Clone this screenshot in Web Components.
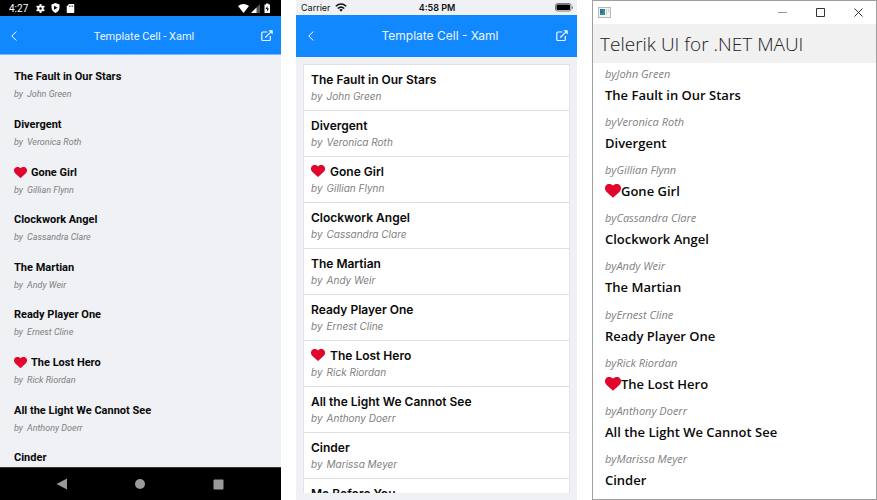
<!DOCTYPE html>
<html lang="en">
<head>
<meta charset="utf-8">
<title>Template Cell - Xaml</title>
<style>
body { margin: 0; background: #fff; }
</style>
</head>
<body>
<device-gallery>
  <android-phone></android-phone>
  <ios-phone></ios-phone>
  <desktop-window></desktop-window>
</device-gallery>
<script>
const BOOKS = [
  ["The Fault in Our Stars", "John Green"],
  ["Divergent", "Veronica Roth"],
  ["Gone Girl", "Gillian Flynn", true],
  ["Clockwork Angel", "Cassandra Clare"],
  ["The Martian", "Andy Weir"],
  ["Ready Player One", "Ernest Cline"],
  ["The Lost Hero", "Rick Riordan", true],
  ["All the Light We Cannot See", "Anthony Doerr"],
  ["Cinder", "Marissa Meyer"],
  ["Me Before You", "Jojo Moyes"]
];

function define(name, html) {
  customElements.define(name, class extends HTMLElement {
    constructor() {
      super();
      this.attachShadow({ mode: "open" }).innerHTML = html;
    }
  });
}

define("favorite-heart", `
<style>
:host { display: block; width: var(--heart, 13px); flex: none; }
svg { display: block; width: 100%; }
</style>
<svg viewBox="0 0 28 24" role="img" aria-label="Favorite"><path fill="#e2062c" d="M14 24 2.400 13.500C-.6 10.500-.8 5.500 1.600 2.600 4.500-.8 10.500-.9 14 2.800 17.500-.9 23.500-.8 26.400 2.600c2.400 2.900 2.200 7.900-.8 10.900Z"/></svg>`);

customElements.define("book-cell", class extends HTMLElement {
  constructor() {
    super();
    this.attachShadow({ mode: "open" }).innerHTML = `
<style>
:host { display: flex; flex-direction: var(--cell-direction, column); justify-content: center; gap: var(--line-gap, 0); box-sizing: border-box; white-space: nowrap; min-width: 0; }
div { display: flex; align-items: center; }
.title { gap: var(--heart-gap, 4px); color: #0a0a0a; font-size: var(--title-size); line-height: var(--title-line); font-weight: var(--title-weight, 600); }
.by { gap: var(--by-gap, 0); color: #808080; font-size: var(--by-size); line-height: var(--by-line); font-style: italic; font-weight: var(--by-weight, 400); }
</style>
<div class="title"><slot name="mark"></slot><slot></slot></div>
<div class="by"><span>by</span><slot name="author"></slot></div>`;
  }
});

customElements.define("book-list", class extends HTMLElement {
  constructor() {
    super();
    const root = this.attachShadow({ mode: "open" });
    root.innerHTML = `
<style>
:host { display: grid; grid-auto-rows: var(--row); align-content: start; overflow: hidden; box-sizing: border-box; min-height: 0; }
book-cell { padding: var(--cell-padding, 0); border-bottom: var(--cell-border, none); }
</style>`;
    this.setAttribute("role", "list");
    for (const [title, author, favorite] of BOOKS.slice(0, Number(this.getAttribute("count")))) {
      const cell = document.createElement("book-cell");
      cell.setAttribute("role", "listitem");
      cell.innerHTML = `${favorite ? '<favorite-heart slot="mark"></favorite-heart>' : ""}<span>${title}</span><span slot="author">${author}</span>`;
      root.append(cell);
    }
  }
});

define("app-bar", `
<style>
:host { display: grid; grid-template-columns: 1fr auto 1fr; align-items: center; box-sizing: border-box; background: #1288ff; color: #fff; }
button { display: block; border: 0; padding: 0; background: none; color: inherit; }
button:last-of-type { justify-self: end; }
h1 { margin: 0; padding-left: 4px; font: inherit; white-space: nowrap; opacity: .92; }
svg { display: block; fill: none; stroke: currentColor; }
</style>
<button aria-label="Back"><svg width="6" height="10" viewBox="0 0 6 10" stroke-width="1"><path d="M5.300.5.800 5l4.500 4.500"/></svg></button>
<h1><slot></slot></h1>
<button aria-label="Open source"><svg width="12" height="12" viewBox="0 0 12 12" stroke-width="1.100"><path d="M6.300 2H1.800Q.8 2 .8 3v6.500q0 1 1 1h6.500q1 0 1-1V6M4.300 7.500l5.500-5.300"/><path fill="currentColor" stroke="none" d="M7.500.3h4.200v4.200Z"/></svg></button>`);

define("android-phone", `
<style>
:host { display: grid; grid-template-rows: 16px 39px 1fr 33px; min-height: 0; min-width: 0; background: #eff1f5; font-family: Roboto, sans-serif; }
.status { display: flex; align-items: center; gap: 6px; padding: 0 9px 0 9px; background: #000; color: #fff; font-size: 10px; line-height: 16px; }
.status span { margin-right: 2px; padding-top: 1px; }
.status svg { display: block; }
.right { display: flex; align-items: center; gap: 2px; margin-left: auto; }
app-bar { padding: 2px 8px 0 11px; font-size: 11px; border-bottom: 1px solid #7cb8f8; }
book-list {
  margin-bottom: 6px; padding: 6px 14px 0;
  --row: calc(100% / 8.4); --title-size: 11px; --title-line: 16px; --title-weight: 700;
  --by-size: 9px; --by-line: 12px; --by-gap: 4px; --line-gap: 3px;
}
nav { display: flex; align-items: center; justify-content: space-between; padding: 0 57px 0 56px; background: #000; border-top: 1px solid #333; }
nav button { display: block; border: 0; padding: 0; background: none; }
nav svg { display: block; fill: #999; }
</style>
<div class="status"><span>4:27</span>
<svg width="9" height="9" viewBox="0 0 18 18"><g fill="none" stroke="#fff"><circle cx="9" cy="9" r="4.500" stroke-width="4"/><path stroke-width="4" d="M9 0v3M9 15v3M1.200 4.500l2.600 1.500M14.200 12l2.600 1.500M1.200 13.500 3.800 12M14.200 6l2.600-1.500"/></g></svg>
<svg width="9" height="10" viewBox="0 0 18 20"><path fill="#fff" d="M9 0l8 3v6c0 5-3 9-8 11-5-2-8-6-8-11V3Z"/><path d="M6 5.500v8l7-4Z"/></svg>
<svg width="9" height="9" viewBox="0 0 18 18"><path fill="#fff" d="M6 0h9q1.500 0 1.500 1.500v15Q16.500 18 15 18H3q-1.500 0-1.500-1.500V5Z"/><path stroke="#000" stroke-width="1.200" d="M7 3v3M10 3v3M13 3v3"/></svg>
<div class="right">
<svg width="11" height="9" viewBox="0 0 22 18"><path fill="#fff" d="M0 4Q11-4 22 4L11 18Z"/></svg>
<svg width="9" height="9" viewBox="0 0 18 18"><path fill="#555" d="M18 0v18H0Z"/><path fill="#fff" d="M11 7v11H0Z"/></svg>
<svg width="10" height="10" viewBox="0 0 20 20"><path fill="#fff" d="M8 1h5v2h3v17H5V3h3Z"/><path d="M11 6l-4 6h3v5l4-6h-3Z"/></svg>
</div></div>
<app-bar>Template Cell - Xaml</app-bar>
<book-list count="9"></book-list>
<nav aria-label="System">
<button aria-label="Back"><svg width="11" height="12" viewBox="0 0 11 12"><path d="M11 .5v11L.5 6Z"/></svg></button>
<button aria-label="Home"><svg width="10" height="10" viewBox="0 0 10 10"><circle cx="5" cy="5" r="5"/></svg></button>
<button aria-label="Recent apps"><svg width="11" height="11" viewBox="0 0 11 11"><rect x=".5" y=".5" width="10" height="10" rx="1"/></svg></button>
</nav>`);

define("ios-phone", `
<style>
:host { display: grid; grid-template-rows: 15px 42px 1fr; min-height: 0; min-width: 0; background: #eff1f5; font-family: Inter, sans-serif; }
.status { display: grid; grid-template-columns: 1fr auto 1fr; align-items: center; padding: 0 4px 0 5px; color: #111; font-size: 9px; line-height: 15px; }
.status div { display: flex; align-items: center; gap: 4px; }
.status b { font-weight: 600; }
.status > svg { justify-self: end; }
app-bar { padding: 0 9px 1px 12px; font-size: 12px; }
book-list {
  margin: 7px 7px 7px; background: #fff; border: 1px solid #e2e3e6; border-bottom: 0;
  --row: 46px; --title-size: 12px; --title-line: 17px; --heart: 14px; --heart-gap: 5px;
  --by-size: 10px; --by-line: 14px; --by-gap: 4px; --line-gap: 1px; --cell-padding: 0 7px 2px; --cell-border: 1px solid #dedfe1;
}
</style>
<div class="status"><div><span>Carrier</span>
<svg width="12" height="9" viewBox="0 0 24 18"><g fill="none" stroke="#111" stroke-width="3"><path d="M1.500 6.500q10.500-9 21 0M5.500 11q6.500-5.500 13 0"/></g><path fill="#111" d="M8.500 13.500q3.500-3 7 0L12 17.500Z"/></svg></div>
<b>4:58 PM</b>
<svg width="18" height="9" viewBox="0 0 18 9"><rect x=".5" y=".5" width="15.500" height="7.500" rx="2" fill="none" stroke="#777"/><rect x="1.500" y="1.500" width="13.500" height="5.500" rx="1"/><path fill="#777" d="M17 3v3q1-.5 1-1.500T17 3Z"/></svg></div>
<app-bar>Template Cell - Xaml</app-bar>
<book-list count="10"></book-list>`);

define("desktop-window", `
<style>
:host { display: grid; grid-template-rows: 23px 39px 1fr; min-height: 0; min-width: 0; box-sizing: border-box; border: 1px solid #a0a0a0; background: #fff; font-family: "Open Sans", sans-serif; }
.caption { display: flex; align-items: center; padding: 0 13px 0 5px; }
.caption svg { display: block; }
.controls { display: flex; gap: 29px; margin-left: auto; }
.controls button { display: block; border: 0; padding: 0; background: none; }
.controls svg { fill: none; stroke: #333; }
h1 { margin: 0; padding: 2px 7px 0; background: #f1f1f1; color: #222; font-size: 19px; line-height: 37px; font-weight: 300; white-space: nowrap; }
book-list {
  padding: 1px 12px 2px;
  --row: calc(100% / 9); --cell-direction: column-reverse; --title-size: 13px; --title-line: 20px;
  --by-size: 11px; --by-line: 16px; --line-gap: 3px; --heart: 16px; --heart-gap: 0; --cell-padding: 0 0 5px;
}
</style>
<div class="caption">
<svg width="13" height="11" viewBox="0 0 13 11"><rect x=".5" y=".5" width="12" height="10" fill="#f4f4f4" stroke="#b5b9bd"/><rect x="2" y="2" width="5" height="6" fill="#3a8f87"/><path fill="#2d6eb0" d="M2 2h3v4H2Z"/><path fill="#cfd4d8" d="M8 2h1v6H8zM10 2h1v3h-1z"/></svg>
<div class="controls">
<button aria-label="Minimize"><svg width="9" height="9" viewBox="0 0 9 9"><path stroke="#999" d="M0 4.500h9"/></svg></button>
<button aria-label="Maximize"><svg width="9" height="9" viewBox="0 0 9 9"><path d="M.5.5h8v8h-8Z"/></svg></button>
<button aria-label="Close"><svg width="9" height="9" viewBox="0 0 9 9"><path d="M.5.5l8 8M8.500.5l-8 8"/></svg></button>
</div></div>
<h1>Telerik UI for .NET MAUI</h1>
<book-list count="9"></book-list>`);

define("device-gallery", `
<style>
:host { display: grid; grid-template-columns: 281fr 281fr 285fr; grid-template-rows: 100%; gap: 15px; height: 100vh; }
</style>
<slot></slot>`);
</script>
</body>
</html>
